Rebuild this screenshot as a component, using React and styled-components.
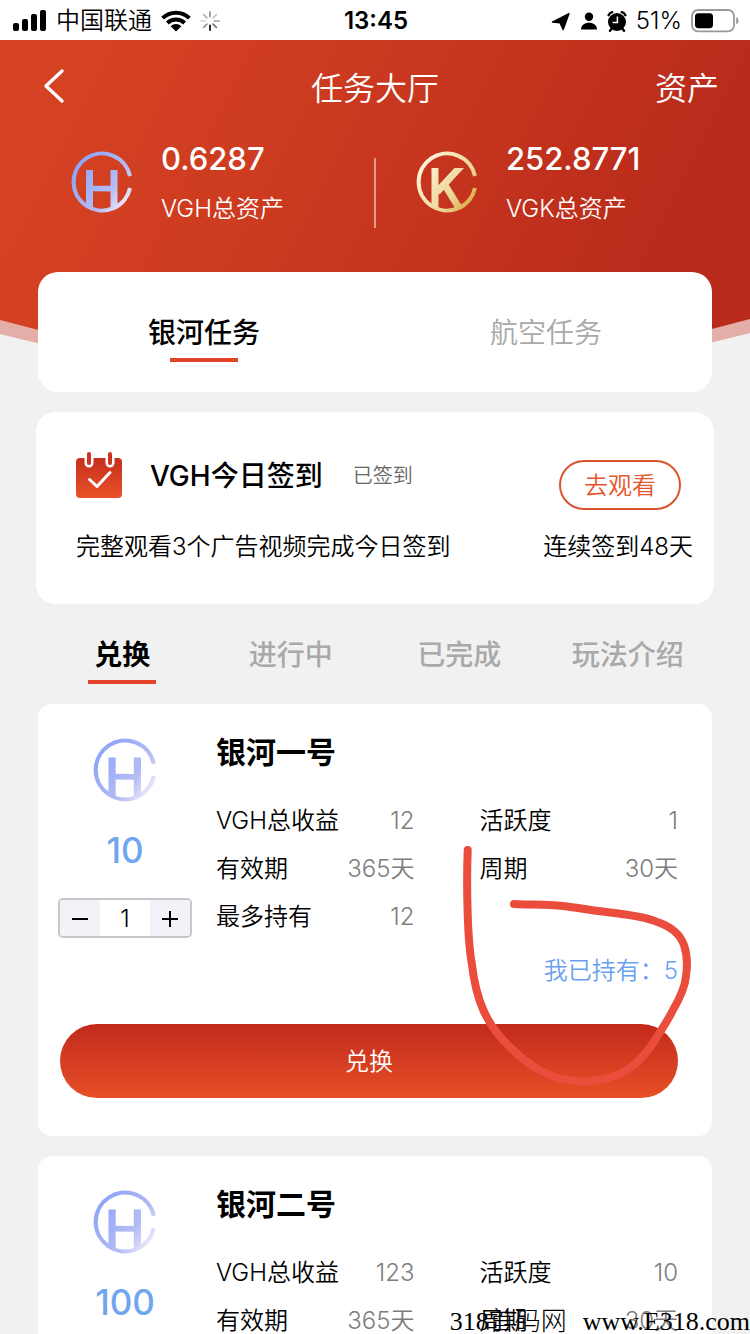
import React, { useState } from 'react';
import styled, { createGlobalStyle } from 'styled-components';

const GlobalStyle = createGlobalStyle`
	* {
		box-sizing: border-box;
	}
	body {
		margin: 0;
		background: #f1f1f1;
		font-family: Inter, 'Noto Sans CJK SC', sans-serif;
		font-weight: 350;
		color: #000;
	}
	button,
	input {
		font: inherit;
		color: inherit;
		border: 0;
		padding: 0;
		background: none;
	}
	h1,
	h2,
	p,
	dl,
	dd {
		margin: 0;
	}
`;

const Page = styled.div`
	position: relative;
	height: 100vh;
	overflow: hidden;
`;

const StatusBar = styled.div`
	display: grid;
	grid-template-columns: 1fr auto 1fr;
	align-items: center;
	height: 40px;
	padding: 0 11px 0 13px;
	background: #fff;
	font-size: 24px;
	line-height: 42px;
`;

const StatusGroup = styled.div`
	display: flex;
	align-items: center;
	gap: ${(props) => props.$gap}px;
	justify-content: ${(props) => (props.$end ? 'flex-end' : 'flex-start')};
`;

const Clock = styled.span`
	font-weight: 600;
`;

const Header = styled.header`
	position: relative;
	height: 232px;
	color: #fff;
`;

const Curve = styled.svg`
	position: absolute;
	left: 0;
	top: 0;
	width: 100%;
	height: 350px;
`;

const NavBar = styled.nav`
	position: relative;
	display: grid;
	grid-template-columns: 1fr auto 1fr;
	align-items: center;
	height: 92px;
	padding: 0 31px;
	font-size: 32px;
	h1 {
		font-size: 32px;
		font-weight: 350;
	}
	a {
		justify-self: end;
		color: #fff;
		text-decoration: none;
	}
`;

const BackButton = styled.button`
	justify-self: start;
	display: flex;
	margin-left: 9px;
`;

const Assets = styled.div`
	position: relative;
	display: grid;
	grid-template-columns: 1fr 1fr;
	padding-top: 8px;
`;

const Asset = styled.div`
	display: flex;
	gap: 28px;
	height: 90px;
	padding-left: ${(props) => (props.$divided ? 41 : 71)}px;
	svg {
		margin-top: 11px;
	}
	strong {
		display: block;
		font-size: 31px;
		font-weight: 500;
		line-height: 38px;
	}
	p {
		margin-top: 12px;
		font-size: 24px;
		line-height: 38px;
	}
`;

const Divider = styled.span`
	position: absolute;
	left: 50%;
	top: 26px;
	width: 2px;
	height: 70px;
	margin-left: -1px;
	background: rgba(255, 255, 255, 0.5);
`;

const Main = styled.main`
	position: relative;
	padding: 0 38px;
`;

const Panel = styled.section`
	position: relative;
	background: #fff;
	border-radius: ${(props) => props.$radius || 20}px;
`;

const MainTabs = styled(Panel)`
	display: flex;
	justify-content: space-between;
	height: 120px;
	padding: 30px 110px;
`;

const Tab = styled.button`
	display: flex;
	flex-direction: column;
	align-items: center;
	height: 60px;
	font-size: 28px;
	line-height: 62px;
	font-weight: ${(props) => (props.$active ? props.$heavy || 500 : props.$light || 350)};
	color: ${(props) => (props.$active ? '#000' : '#a9a9a9')};
	&::after {
		content: '';
		width: 68px;
		height: 4px;
		margin-top: -6px;
		background: ${(props) => (props.$active ? '#e2432a' : 'transparent')};
	}
`;

const SignCard = styled(Panel)`
	height: 192px;
	margin: 20px -2px 0;
	padding: 40px 21px 0 40px;
	font-size: 24px;
`;

const SignTop = styled.div`
	display: flex;
	align-items: flex-start;
	height: 76px;
	h2 {
		margin-left: 28px;
		font-size: 28px;
		font-weight: 500;
		line-height: 48px;
	}
	span {
		flex: 1;
		margin-left: 30px;
		font-size: 20px;
		line-height: 48px;
		color: #666;
	}
`;

const SignBottom = styled.div`
	display: flex;
	justify-content: space-between;
	line-height: 38px;
`;

const WatchButton = styled.button`
	width: 122px;
	height: 50px;
	margin: 8px 12px 0 0;
	padding-bottom: 3px;
	border: 2px solid #d9552f;
	border-radius: 25px;
	color: #e5552b;
`;

const SubTabs = styled.div`
	display: grid;
	grid-template-columns: repeat(4, 1fr);
	height: 100px;
	padding-top: 20px;
`;

const TaskCard = styled(Panel)`
	height: 432px;
	margin-bottom: 20px;
	padding: 28px 34px 0 20px;
`;

const TaskBody = styled.div`
	display: flex;
	gap: 24px;
	height: 292px;
`;

const Product = styled.div`
	display: flex;
	flex-direction: column;
	align-items: center;
	width: 134px;
	padding-top: 6px;
	strong {
		margin: 28px 0;
		font-size: 35px;
		line-height: 40px;
		font-weight: 500;
		color: #70a6ee;
	}
`;

const Stepper = styled.div`
	display: flex;
	width: 134px;
	height: 40px;
	border: 2px solid #c6c7ca;
	border-radius: 5px;
	overflow: hidden;
	button {
		display: flex;
		align-items: center;
		justify-content: center;
		width: 40px;
		background: #f2f3f8;
	}
	input {
		flex: 1;
		min-width: 0;
		text-align: center;
		font-size: 24px;
	}
`;

const Details = styled.div`
	flex: 1;
	h2 {
		font-size: 30px;
		line-height: 40px;
		font-weight: 700;
	}
`;

const Stats = styled.dl`
	display: grid;
	grid-template-columns: 1fr 1fr;
	column-gap: 65px;
	margin-top: 25px;
	font-size: 24px;
	line-height: 48px;
`;

const Stat = styled.div`
	display: flex;
	justify-content: space-between;
	dd {
		color: #7d7d7d;
	}
`;

const Held = styled.p`
	margin-top: 6px;
	font-size: 24px;
	line-height: 48px;
	text-align: right;
	color: #6a9ff0;
`;

const ExchangeButton = styled.button`
	display: block;
	width: calc(100% - 2px);
	height: 74px;
	margin-left: 2px;
	padding-bottom: 3px;
	border-radius: 37px;
	background: linear-gradient(#c12a1c, #e74f26);
	color: #fff;
	font-size: 24px;
`;

const Scribble = styled.svg`
	position: absolute;
	right: 16px;
	top: 140px;
	pointer-events: none;
`;

const Watermark = styled.div`
	position: absolute;
	right: 0;
	bottom: 0;
	display: flex;
	align-items: baseline;
	gap: 16px;
	font-family: 'Liberation Serif', 'Noto Sans CJK SC', serif;
	font-size: 26px;
	line-height: 24px;
	font-weight: 300;
`;

function Coin({ letter, size = 62, id }) {
	const stops = letter === 'K' ? ['#fff3d6', '#ecd598', '#dda53c'] : ['#8fa5f7', '#b4bcf5', '#f3effb'];
	const monogram = letter === 'K' ? 'M19 17V60M21 41L46 14M27 31L45 60' : 'M18.5 19V60M43 19V60';
	return (
		<svg width={size} height={size} viewBox='0 0 62 62'>
			<defs>
				<linearGradient id={id} gradientUnits='userSpaceOnUse' x1='8' y1='12' x2='60' y2='50'>
					<stop offset='0' stopColor={stops[0]} />
					<stop offset='0.65' stopColor={stops[1]} />
					<stop offset='1' stopColor={stops[2]} />
				</linearGradient>
				<clipPath id={`${id}-clip`}>
					<path d='M0 17H62V31H60.5A29.5 29.5 0 0 1 1.5 31H0Z' />
				</clipPath>
			</defs>
			<g fill='none' stroke={`url(#${id})`}>
				<path d='M59 25A28.5 28.5 0 1 0 59 37' strokeWidth='4' />
				<g clipPath={`url(#${id}-clip)`}>
					<path d={monogram} strokeWidth='7' />
					{letter === 'H' && <path d='M20 37.5L42 37.6' strokeWidth='5.6' />}
				</g>
			</g>
		</svg>
	);
}

function SignalIcon() {
	return (
		<svg width='34' height='22' viewBox='0 0 34 22'>
			<rect x='0' y='13' width='6' height='8' rx='2' />
			<rect x='9' y='9' width='6' height='12' rx='2' />
			<rect x='18' y='4' width='6' height='17' rx='2' />
			<rect x='27' y='0' width='6' height='21' rx='2' />
		</svg>
	);
}

function WifiIcon() {
	return (
		<svg width='30' height='22' viewBox='0 0 30 22'>
			<g fill='none' stroke='#000' strokeWidth='4'>
				<path d='M1.6 8.2A19 19 0 0 1 28.4 8.2' />
				<path d='M6.4 13A12.2 12.2 0 0 1 23.6 13' />
			</g>
			<path d='M9.6 16.2A7.6 7.6 0 0 1 20.4 16.2L15 21.6Z' />
		</svg>
	);
}

function SpinnerIcon() {
	const shades = ['#999', '#c8c8c8', '#b5b5b5', '#777', '#111', '#999', '#ddd', '#b5b5b5'];
	return (
		<svg width='20' height='20' viewBox='0 0 20 20'>
			{shades.map((shade, i) => (
				<line
					key={i}
					x1='10'
					y1='1'
					x2='10'
					y2='5.6'
					stroke={shade}
					strokeWidth='1.8'
					strokeLinecap='round'
					transform={`rotate(${i * 45} 10 10)`}
				/>
			))}
		</svg>
	);
}

function LocationIcon() {
	return (
		<svg width='20' height='20' viewBox='0 0 20 20'>
			<path
				d='M18 2.6L1.4 11L9 11.8L12.2 18.6Z'
				stroke='#000'
				strokeWidth='1.4'
				strokeLinejoin='round'
			/>
		</svg>
	);
}

function PersonIcon() {
	return (
		<svg width='18' height='20' viewBox='0 0 18 20'>
			<circle cx='9' cy='5.8' r='4.2' />
			<path d='M1 18.6C1 14 4.6 11.8 9 11.8S17 14 17 18.6Z' />
		</svg>
	);
}

function AlarmIcon() {
	return (
		<svg width='20' height='21' viewBox='0 0 20 21'>
			<circle cx='10' cy='11' r='9' />
			<path
				d='M1.6 4.2Q2.8 1.8 5.2 1.2M14.8 1.2Q17.2 1.8 18.4 4.2M4.4 18L3 19.8M15.6 18L17 19.8'
				fill='none'
				stroke='#000'
				strokeWidth='2.4'
				strokeLinecap='round'
			/>
			<path d='M10.4 5.6V11.4H5.6' fill='none' stroke='#fff' strokeWidth='1.5' />
		</svg>
	);
}

function BatteryIcon() {
	return (
		<svg width='48' height='24' viewBox='0 0 48 24'>
			<rect x='1' y='1' width='42' height='21.4' rx='6' fill='none' stroke='#999' strokeWidth='1.8' />
			<rect x='4' y='4.2' width='18' height='15' rx='3.4' />
			<path d='M45.2 8V15.6Q47.6 14.4 47.6 11.8T45.2 8Z' fill='#999' />
		</svg>
	);
}

function CalendarIcon() {
	return (
		<svg width='46' height='46' viewBox='0 0 46 46'>
			<defs>
				<linearGradient id='calendar' x1='0' y1='0' x2='0' y2='1'>
					<stop offset='0' stopColor='#c62f1d' />
					<stop offset='1' stopColor='#e75228' />
				</linearGradient>
			</defs>
			<rect y='6' width='46' height='40' rx='4' fill='url(#calendar)' />
			<g strokeLinecap='round' fill='none'>
				<path d='M13 3V11M34 3V11' stroke='#fff' strokeWidth='9' />
				<path d='M13 2V11M34 2V11' stroke='#cc3420' strokeWidth='4' />
				<path d='M13.5 27.5L21 34.5L34 20.5' stroke='#fff' strokeWidth='3' strokeLinejoin='round' />
			</g>
		</svg>
	);
}

function Task({ id, name, price, stats, held, children }) {
	const [count, setCount] = useState(1);
	return (
		<TaskCard $radius={14}>
			<TaskBody>
				<Product>
					<Coin letter='H' size={64} id={id} />
					<strong>{price}</strong>
					<Stepper>
						<button aria-label='减少' onClick={() => setCount(Math.max(1, count - 1))}>
							<svg width='18' height='18' viewBox='0 0 18 18' stroke='#000' strokeWidth='2'>
								<path d='M1 10H17' />
							</svg>
						</button>
						<input aria-label='数量' value={count} onChange={(e) => setCount(Number(e.target.value) || 1)} />
						<button aria-label='增加' onClick={() => setCount(count + 1)}>
							<svg width='18' height='18' viewBox='0 0 18 18' stroke='#000' strokeWidth='2'>
								<path d='M1 10H17M9 2V18' />
							</svg>
						</button>
					</Stepper>
				</Product>
				<Details>
					<h2>{name}</h2>
					<Stats>
						{stats.map(([label, value]) => (
							<Stat key={label}>
								<dt>{label}</dt>
								<dd>{value}</dd>
							</Stat>
						))}
					</Stats>
					<Held>我已持有：{held}</Held>
				</Details>
			</TaskBody>
			<ExchangeButton>兑换</ExchangeButton>
			{children}
		</TaskCard>
	);
}

export default function App() {
	const [mainTab, setMainTab] = useState('银河任务');
	const [subTab, setSubTab] = useState('兑换');
	return (
		<Page>
			<GlobalStyle />
			<StatusBar>
				<StatusGroup $gap={9}>
					<SignalIcon />
					<span>中国联通</span>
					<WifiIcon />
					<SpinnerIcon />
				</StatusGroup>
				<Clock>13:45</Clock>
				<StatusGroup $gap={9} $end>
					<LocationIcon />
					<PersonIcon />
					<AlarmIcon />
					<span>51%</span>
					<BatteryIcon />
				</StatusGroup>
			</StatusBar>
			<Header>
				<Curve viewBox='0 0 750 350' preserveAspectRatio='none'>
					<defs>
						<linearGradient id='header' gradientUnits='userSpaceOnUse' x1='60' y1='60' x2='600' y2='330'>
							<stop offset='0' stopColor='#d54223' />
							<stop offset='0.35' stopColor='#cd3b20' />
							<stop offset='1' stopColor='#b92b1b' />
						</linearGradient>
					</defs>
					<path d='M0 0H750V293Q375 390 0 294Z' fill='#e3aea8' />
					<path d='M0 0H750V279Q375 382 0 280Z' fill='url(#header)' />
				</Curve>
				<NavBar>
					<BackButton aria-label='返回'>
						<svg width='28' height='36' viewBox='0 0 28 36'>
							<path
								d='M22 3L6 18L22 33'
								fill='none'
								stroke='#fff'
								strokeWidth='3.4'
								strokeLinecap='round'
								strokeLinejoin='round'
							/>
						</svg>
					</BackButton>
					<h1>任务大厅</h1>
					<a href='#assets'>资产</a>
				</NavBar>
				<Assets>
					<Asset>
						<Coin letter='H' id='vgh' />
						<div>
							<strong>0.6287</strong>
							<p>VGH总资产</p>
						</div>
					</Asset>
					<Divider />
					<Asset $divided>
						<Coin letter='K' id='vgk' />
						<div>
							<strong>252.8771</strong>
							<p>VGK总资产</p>
						</div>
					</Asset>
				</Assets>
			</Header>
			<Main>
				<MainTabs>
					{['银河任务', '航空任务'].map((name) => (
						<Tab key={name} $active={mainTab === name} onClick={() => setMainTab(name)}>
							{name}
						</Tab>
					))}
				</MainTabs>
				<SignCard>
					<SignTop>
						<CalendarIcon />
						<h2>VGH今日签到</h2>
						<span>已签到</span>
						<WatchButton>去观看</WatchButton>
					</SignTop>
					<SignBottom>
						<p>完整观看3个广告视频完成今日签到</p>
						<p>连续签到48天</p>
					</SignBottom>
				</SignCard>
				<SubTabs>
					{['兑换', '进行中', '已完成', '玩法介绍'].map((name) => (
						<Tab key={name} $heavy={700} $light={500} $active={subTab === name} onClick={() => setSubTab(name)}>
							{name}
						</Tab>
					))}
				</SubTabs>
				<Task
					id='task-one'
					name='银河一号'
					price={10}
					held={5}
					stats={[
						['VGH总收益', '12'],
						['活跃度', '1'],
						['有效期', '365天'],
						['周期', '30天'],
						['最多持有', '12'],
					]}
				>
					<Scribble width='236' height='244' viewBox='460 844 236 244'>
						<path
							d='M467.7 850C467 870 467 890 467.5 907C468 930 469 947 471.7 963C474 982 477 996 483.3 1010C490 1025 499 1037 510 1047C520 1057 531 1066 543.3 1072C557 1079 571 1082 586.7 1081.5C602 1081 615 1077 626.7 1070C637 1063 646 1054 653 1043C660 1032 667 1022 673 1010C680 998 685 988 686 976C688 963 687 954 684 945C680 934 670 926 656.7 921.7C645 917 630 915 616.7 913.3C595 911 580 908 563 906C545 904 530 905 514 904'
							fill='none'
							stroke='#ea4d3c'
							strokeWidth='8'
							strokeLinecap='round'
							strokeLinejoin='round'
						/>
					</Scribble>
				</Task>
				<Task
					id='task-two'
					name='银河二号'
					price={100}
					held={0}
					stats={[
						['VGH总收益', '123'],
						['活跃度', '10'],
						['有效期', '365天'],
						['周期', '30天'],
						['最多持有', '12'],
					]}
				/>
			</Main>
			<Watermark>
				<span>318首码网</span>
				<span>www.E318.com</span>
			</Watermark>
		</Page>
	);
}
